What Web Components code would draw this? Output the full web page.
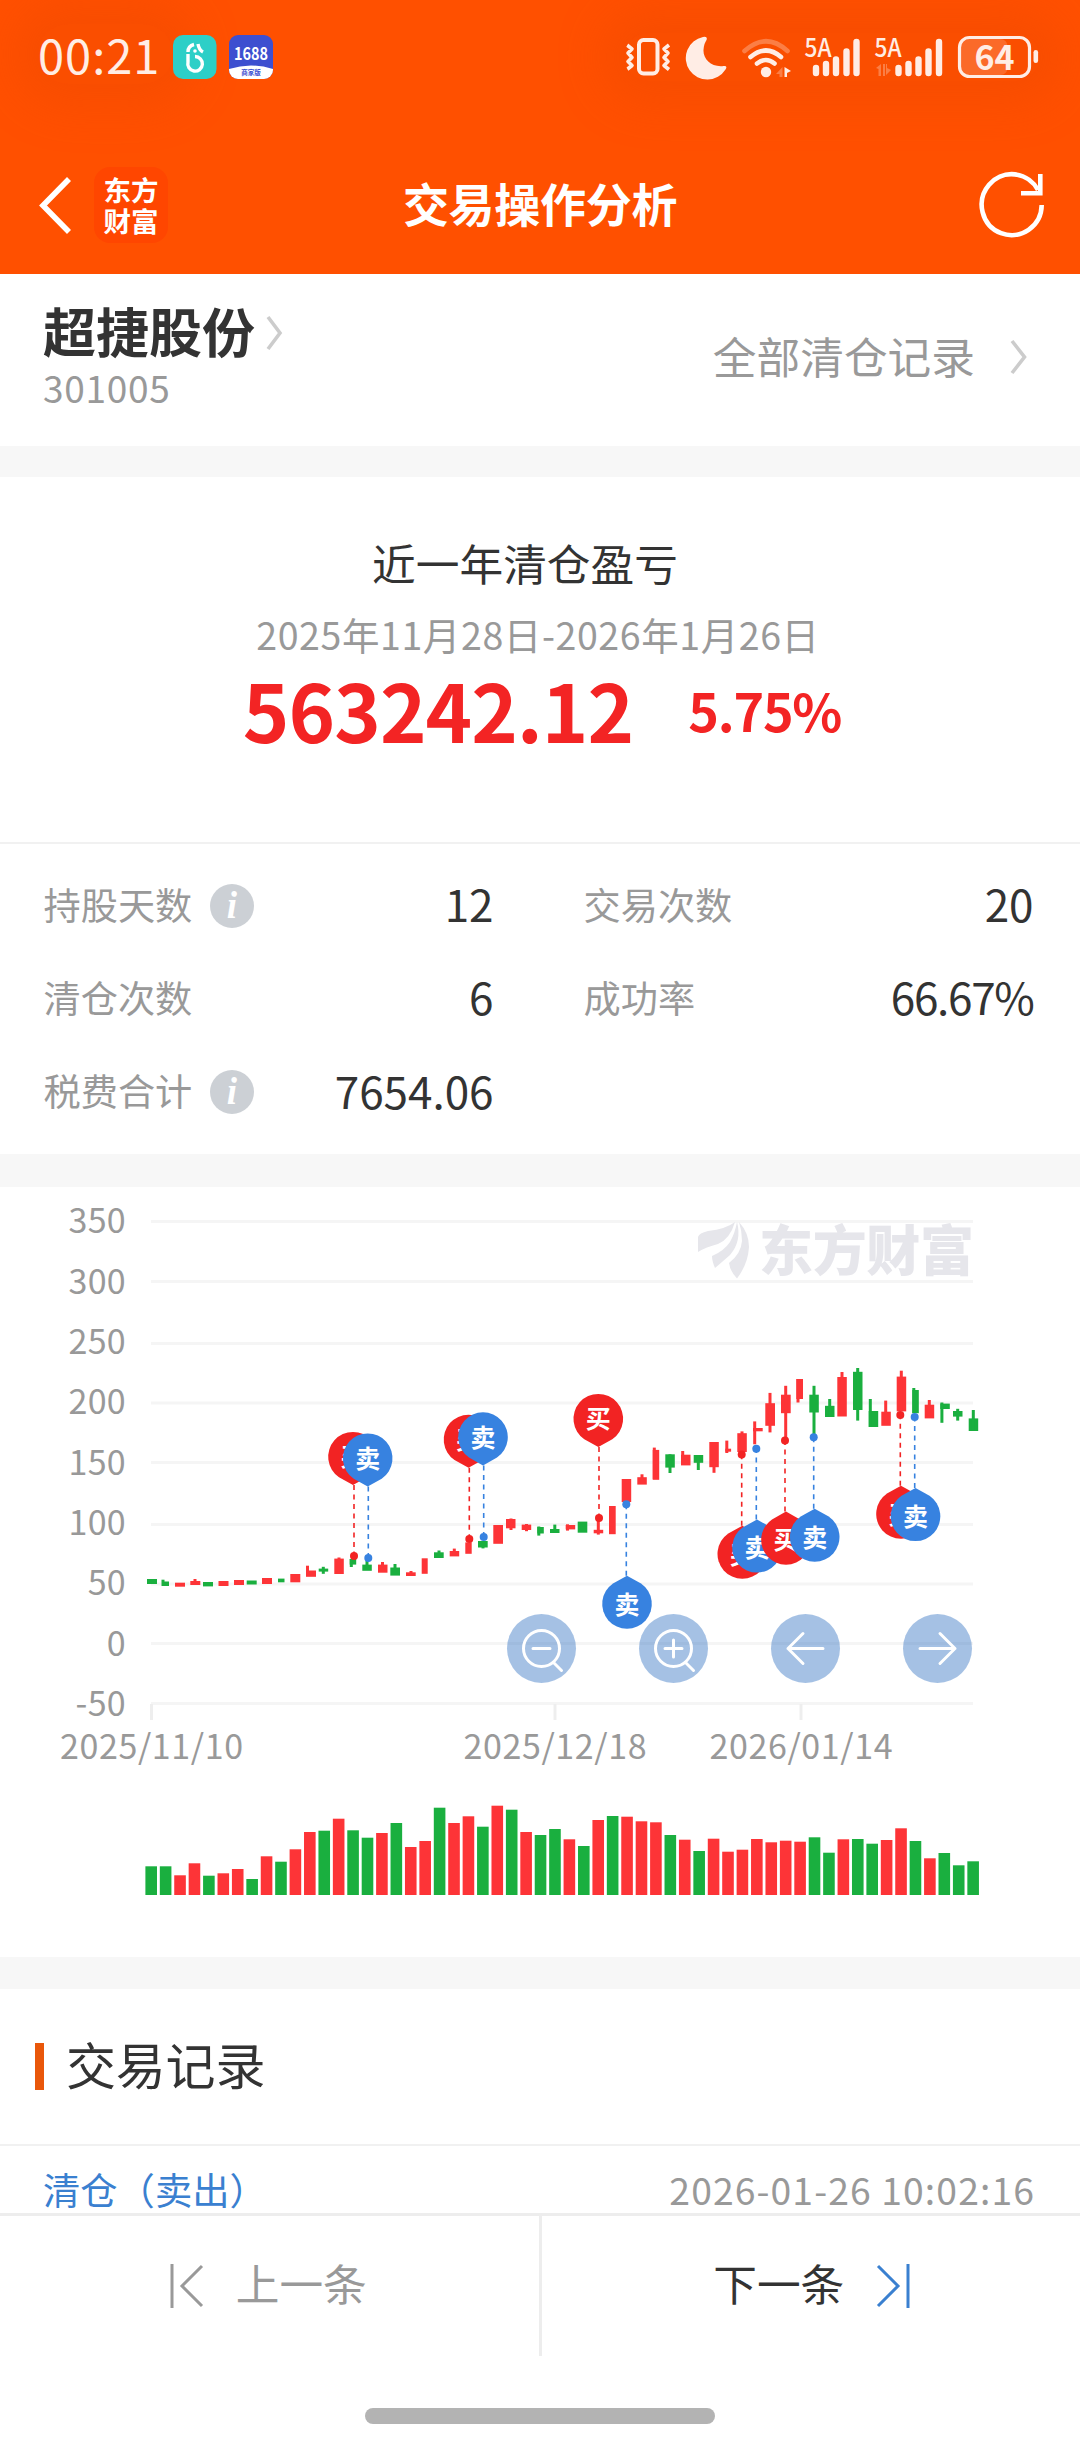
<!DOCTYPE html>
<html lang="zh-CN">
<head>
<meta charset="utf-8">
<title>交易操作分析</title>
<style>
	body{
		margin: 0;
		width: 1080px;
		height: 2444px;
		overflow: hidden;
		background: #fff;
		color: #333;
		font-family: "Noto Sans CJK SC", "Noto Sans", sans-serif;
		--grey: #999;
		--blue: #3a80d0;
		--line: #ededed;
	}
	main{
		display: flex;
		flex-direction: column;
		height: 2444px;
	}
	.top{
		background: #ff5000;
		height: 274px;
		flex: none;
		overflow: hidden;
	}
	.stats{
		box-sizing: border-box;
		display: grid;
		grid-template-columns: 450px 450px;
		grid-auto-rows: 93.3px;
		column-gap: 90px;
		height: 312px;
		flex: none;
		padding: 16px 0 0 43.500px;
		border-top: 2px solid #f1f1f1;
	}
</style>
</head>
<body>
<main>
	<div class="top">
		<status-bar></status-bar>
		<nav-bar>交易操作分析</nav-bar>
	</div>
	<stock-header code="301005">
		超捷股份
		<span slot="link">全部清仓记录</span>
	</stock-header>
	<section-gap style="--h: 31px"></section-gap>
	<profit-summary>
		近一年清仓盈亏
		<span slot="range">2025年11月28日-2026年1月26日</span>
		<span slot="amount">563242.12</span>
		<span slot="rate">5.75%</span>
	</profit-summary>
	<div class="stats">
		<stat-item value="12" info>持股天数</stat-item>
		<stat-item value="20">交易次数</stat-item>
		<stat-item value="6">清仓次数</stat-item>
		<stat-item value="66.67%">成功率</stat-item>
		<stat-item value="7654.06" info>税费合计</stat-item>
	</div>
	<section-gap style="--h: 33px"></section-gap>
	<trade-chart></trade-chart>
	<section-gap style="--h: 32px"></section-gap>
	<record-list>
		交易记录
		<span slot="type">清仓（卖出）</span>
		<span slot="time">2026-01-26 10:02:16</span>
	</record-list>
	<pager-bar>
		<span slot="prev">上一条</span>
		<span slot="next">下一条</span>
	</pager-bar>
</main>

<script>
'use strict';

function define(name, html, setup) {
	const template = document.createElement('template');
	template.innerHTML = html;
	customElements.define(name, class extends HTMLElement {
		constructor() {
			super();
			this.attachShadow({ mode: 'open' }).appendChild(template.content.cloneNode(true));
		}
		connectedCallback() {
			if (setup) setup(this.shadowRoot, this);
		}
	});
}

define('section-gap', `
	<style>
	:host{
		display: block;
		flex: none;
		height: var(--h);
		background: #f7f7f7;
	}
	</style>
`);

define('status-bar', `
	<style>
	:host{
		display: flex;
		justify-content: space-between;
		align-items: center;
		height: 114px;
		padding: 0 40px 0 38px;
		color: #ffede5;
	}
	.left{
		display: flex;
		align-items: center;
	}
	.time{
		width: 135px;
		font-size: 47px;
		line-height: 60px;
		letter-spacing: 1px;
		white-space: nowrap;
		margin-top: -6px;
		border-radius: 30px;
		background: rgb(236 72 0 / .25);
		box-shadow: 0 0 45px 20px rgb(236 72 0 / .4);
	}
	.right{
		border-radius: 40px;
		background: rgb(236 72 0 / .25);
		box-shadow: 0 0 45px 20px rgb(236 72 0 / .4);
	}
	svg{
		display: block;
	}
	</style>
	<div class="left">
		<div class="time">00:21</div>
		<svg width="100" height="44" viewBox="173 35 100 44">
			<rect x="173" y="35" width="43.500" height="44" rx="10" fill="#2dcfc7"/>
			<g fill="none" stroke="#fff" stroke-width="3.400">
				<path d="M188 52 q0 -6 6 -7.500"/>
				<path d="M188 54 v8 a7.300 7.300 0 1 0 7 -5.500"/>
				<path d="M198 44 q1 6 5 8"/>
			</g>
			<circle cx="195" cy="51" r="1.800" fill="#fff"/>
			<clipPath id="app"><rect x="229" y="35" width="44" height="44" rx="9"/></clipPath>
			<g clip-path="url(#app)">
				<rect x="229" y="35" width="44" height="44" fill="#3d4fd0"/>
				<path d="M229 69 Q251 62 273 69 V79 H229 Z" fill="#fff"/>
			</g>
			<text x="251" y="59.500" font-size="17" font-weight="700" fill="#fff" text-anchor="middle" textLength="34" lengthAdjust="spacingAndGlyphs">1688</text>
			<text x="251" y="74.500" font-size="6.500" font-weight="700" fill="#3d4fd0" text-anchor="middle">商家版</text>
		</svg>
	</div>
	<svg class="right" width="416" height="48" viewBox="624 33 416 48" fill="#ffede5">
		<rect x="639" y="40" width="18.500" height="33.500" rx="4.500" fill="none" stroke="#ffede5" stroke-width="4"/>
		<path d="M627 45 l5 4 l-4 4 l4 4.500 l-4 4 l4 4 l-5 4 M669 45 l-5 4 l4 4 l-4 4.500 l4 4 l-4 4 l5 4" fill="none" stroke="#ffede5" stroke-width="3.600" stroke-linejoin="round"/>
		<path d="M703 37 a21.500 21.500 0 1 0 22.500 32.500 q2.500 -4 -2 -3.500 c-12 1.500 -20.500 -7 -20 -16 c.3 -5 1.500 -7.500 3 -10 q1.500 -4 -3.500 -3 Z"/>
		<g fill="none" stroke="#ffede5" stroke-width="4.600" stroke-linecap="round">
			<path d="M744.500 51 Q766 31.500 787.500 51" opacity=".3"/>
			<path d="M750.500 57 Q766 44 781 57"/>
			<path d="M757 63.500 Q766 56.500 774.500 63.500"/>
		</g>
		<circle cx="766" cy="72" r="5.200"/>
		<path d="M782.500 67 v10 h-3 v-3 h-3.500 Z" opacity=".3"/>
		<path d="M784.500 67 l6.500 4 l-4 2 v4 h-2.500 Z"/>
		<text x="804.500" y="56.500" font-size="25" font-weight="500" textLength="27" lengthAdjust="spacingAndGlyphs">5A</text>
		<text x="874.500" y="56.500" font-size="25" font-weight="500" textLength="27" lengthAdjust="spacingAndGlyphs">5A</text>
		<g stroke="#ffede5" stroke-width="6.400" stroke-linecap="round">
			<path d="M816 68 v5 M826 64 v9 M836 59.500 v13.500 M846.500 51.500 v21.500 M856.500 42 v31"/>
			<path d="M898.500 68 v5 M908.500 64 v9 M918.500 59.500 v13.500 M928.500 51.500 v21.500 M939 42 v31"/>
		</g>
		<path d="M876 68 l5 -4 v12 h-2.500 v-7 Z M883 64 h2 v12 h-2 Z M887 64 v4 l4 2 l-5 5 v-11 Z" opacity=".3"/>
		<rect x="961" y="39" width="46.500" height="36" rx="7" opacity=".18"/>
		<rect x="959.500" y="37.500" width="70" height="39" rx="10" fill="none" stroke="#ffede5" stroke-width="3.200"/>
		<rect x="1033.500" y="50" width="4.600" height="13" rx="2.300"/>
		<text x="994.500" y="70" font-size="34" font-weight="700" text-anchor="middle">64</text>
	</svg>
`);

define('nav-bar', `
	<style>
	:host{
		display: grid;
		grid-template-columns: 200px 1fr 200px;
		align-items: center;
		height: 160px;
		padding-top: 22px;
		box-sizing: border-box;
		color: #fff;
	}
	.left{
		display: flex;
		align-items: center;
		gap: 20px;
		padding-left: 38px;
	}
	.brand{
		width: 74px;
		height: 76px;
		padding-top: 7px;
		box-sizing: border-box;
		border-radius: 16px;
		background: #ff4600;
		font-size: 27.500px;
		line-height: 31px;
		font-weight: 700;
		text-align: center;
	}
	h1{
		margin: 0 0 7px;
		font-size: 46px;
		line-height: 60px;
		font-weight: 700;
		text-align: center;
		letter-spacing: -.3px;
	}
	.reload{
		justify-self: end;
		margin-right: 34px;
	}
	svg{
		display: block;
	}
	</style>
	<div class="left">
		<svg width="36" height="60" viewBox="0 0 36 60"><path d="M31 4 L5 30.500 L31 57" fill="none" stroke="#fff" stroke-width="5.600"/></svg>
		<div class="brand">东方<br>财富</div>
	</div>
	<h1><slot></slot></h1>
	<svg class="reload" width="70" height="70" viewBox="975 170 70 70" fill="none" stroke="#fff" stroke-width="4.600">
		<path d="M1040.700 205 A30 30.500 0 1 1 1037 190"/>
		<path d="M1039.300 174 V193.300 H1020"/>
	</svg>
`);

define('stock-header', `
	<style>
	:host{
		display: flex;
		justify-content: space-between;
		flex: none;
		height: 172px;
		box-sizing: border-box;
		padding: 25px 52px 0 43px;
	}
	.name, .link{
		display: flex;
		align-items: center;
	}
	.name{
		gap: 11px;
		font-size: 53px;
		font-weight: 700;
		line-height: 62px;
	}
	.name svg{
		margin-top: 5px;
	}
	.code{
		margin-top: 6px;
		font-size: 37px;
		line-height: 40px;
		letter-spacing: .7px;
		color: var(--grey);
	}
	.link{
		gap: 35px;
		height: 100px;
		margin-top: 8px;
		font-size: 43.700px;
		color: var(--grey);
	}
	.link ::slotted(*){
		margin-top: -4px;
	}
	</style>
	<div>
		<div class="name">
			<span><slot></slot></span>
			<svg width="18" height="36" viewBox="0 0 18 36"><path d="M2 2 L14 18 L2 34" fill="none" stroke="#ccc" stroke-width="3.600"/></svg>
		</div>
		<div class="code"></div>
	</div>
	<div class="link">
		<slot name="link"></slot>
		<svg width="18" height="36" viewBox="0 0 18 36"><path d="M2 2 L14.500 18 L2 34" fill="none" stroke="#ccc" stroke-width="3.600"/></svg>
	</div>
`, (root, host) => {
	root.querySelector('.code').textContent = host.getAttribute('code');
});

define('profit-summary', `
	<style>
	:host{
		display: block;
		flex: none;
		height: 365px;
		box-sizing: border-box;
		padding-top: 54px;
		text-align: center;
	}
	.title{
		padding-right: 30px;
		font-size: 43.700px;
		line-height: 62px;
	}
	.range{
		font-size: 37.500px;
		line-height: 50px;
		margin-top: 16px;
		padding-right: 4px;
		letter-spacing: .6px;
		color: var(--grey);
	}
	.figures{
		display: flex;
		justify-content: center;
		align-items: center;
		gap: 55px;
		height: 90px;
		margin-top: 5px;
		padding-left: 4px;
		font-weight: 700;
		color: #f32424;
	}
	.amount{
		font-size: 79px;
		line-height: 90px;
		letter-spacing: -.9px;
	}
	.rate{
		font-size: 52px;
		line-height: 90px;
		letter-spacing: -1.2px;
		margin-top: 2px;
	}
	</style>
	<div class="title"><slot></slot></div>
	<div class="range"><slot name="range"></slot></div>
	<div class="figures">
		<div class="amount"><slot name="amount"></slot></div>
		<div class="rate"><slot name="rate"></slot></div>
	</div>
`);

define('stat-item', `
	<style>
	:host{
		display: flex;
		align-items: center;
	}
	.label{
		font-size: 37.200px;
		color: var(--grey);
		margin-top: -6px;
	}
	svg{
		display: none;
		margin: -2px 0 0 18px;
	}
	:host([info]) svg{
		display: block;
	}
	.value{
		margin-left: auto;
		margin-top: -7px;
		font-size: 44px;
	}
	:host([value$="%"]) .value{
		letter-spacing: -1.3px;
	}
	</style>
	<span class="label"><slot></slot></span>
	<svg width="44" height="44" viewBox="0 0 44 44">
		<circle cx="22" cy="22" r="22" fill="#ccd0d5"/>
		<text x="22" y="34" font-family="Liberation Serif, serif" font-size="37" font-weight="700" font-style="italic" fill="#fff" text-anchor="middle">i</text>
	</svg>
	<span class="value"></span>
`, (root, host) => {
	root.querySelector('.value').textContent = host.getAttribute('value');
});

// colour, body x, width, top, bottom, then wick x, high, low
const candles = [
	['g', 147, 10, 1580, 1585],
	['g', 162, 7, 1582.5, 1587, 163, 1580.7, 1587],
	['r', 175, 10, 1583.7, 1587.7],
	['r', 190.3, 10, 1582, 1586, 195, 1580, 1586],
	['g', 203, 10, 1583, 1587.4],
	['r', 218.5, 10, 1582, 1587],
	['r', 234, 10, 1581, 1586],
	['g', 246.7, 10, 1581.5, 1585.5],
	['r', 262, 10, 1579, 1585],
	['g', 278, 6.5, 1579.6, 1583.3],
	['r', 290.3, 10, 1575, 1583.3],
	['r', 306, 10, 1571.5, 1577.8, 307.5, 1566.7, 1577],
	['g', 318.7, 9.5, 1569.6, 1572.6, 323.3, 1567.8, 1574.8],
	['r', 334.3, 9.5, 1559.6, 1575, 339, 1558.5, 1575],
	['g', 349.7, 6.5, 1560, 1565.6, 351.3, 1560, 1568],
	['g', 362.3, 9.5, 1565.6, 1571.8, 367, 1562, 1571],
	['r', 378, 9.5, 1565.6, 1573.7, 382.5, 1563, 1573],
	['g', 390.3, 9.7, 1568.5, 1576.6, 395, 1565, 1576],
	['r', 406, 9.7, 1573.3, 1577, 411, 1572, 1577],
	['r', 421.7, 6, 1559.3, 1574.8],
	['g', 434, 9.7, 1553.3, 1559, 439, 1551.5, 1559],
	['r', 449.7, 9.5, 1552, 1557.4, 454.3, 1549.6, 1557],
	['r', 465.3, 6.4, 1543.4, 1554.8],
	['g', 478, 9.7, 1542, 1548.5, 483, 1542, 1549.4],
	['r', 493.3, 9.7, 1526, 1544.8],
	['r', 506, 9.5, 1520, 1529.3, 511, 1519.5, 1531],
	['r', 521.7, 9.5, 1525.6, 1531, 526.5, 1525, 1532.2],
	['g', 537.3, 6.5, 1528, 1534.5, 538.8, 1527.5, 1536.6],
	['g', 550, 9.5, 1530, 1534, 554.8, 1525.6, 1534],
	['r', 565.7, 9.5, 1526, 1530.4, 567.5, 1525.3, 1531.6],
	['g', 577.7, 9.6, 1522.6, 1533.7],
	['r', 593.7, 9.5, 1530.8, 1534.3, 598.3, 1522, 1535.6],
	['r', 609, 6.7, 1507, 1535.2],
	['r', 621.7, 9.5, 1480, 1503],
	['r', 637.3, 9.5, 1478.2, 1485.6, 642, 1475.3, 1485],
	['r', 652.7, 6.5, 1450.9, 1480.8, 654.3, 1448.6, 1480],
	['g', 665.3, 9.5, 1455.3, 1468.6, 670, 1455.3, 1474],
	['r', 681, 9.5, 1455.7, 1466.4, 682.7, 1452, 1466],
	['g', 693.7, 9.5, 1456, 1463.8, 698.3, 1456, 1471],
	['r', 709.3, 9.5, 1443, 1468.2, 714, 1443, 1473.8],
	['r', 725.3, 5.8, 1449.7, 1452.7, 726.8, 1441.6, 1454],
	['r', 737.3, 9.5, 1434.2, 1453, 742, 1432.4, 1453],
	['r', 753, 9.7, 1429, 1432.3, 754.7, 1422.4, 1445.3],
	['r', 765.3, 9.7, 1404.2, 1426.8, 770, 1393.9, 1433.4],
	['r', 781, 9.7, 1395.7, 1414.2, 785.7, 1386.8, 1441],
	['r', 796.3, 6.7, 1380, 1400, 798, 1380, 1403.5],
	['g', 809.3, 9.5, 1395.7, 1413.5, 814, 1386.8, 1438],
	['g', 825, 9.5, 1406.8, 1418, 829.7, 1400, 1418],
	['r', 837.3, 9.5, 1378, 1417.5, 842, 1373, 1417],
	['g', 853, 9.5, 1372.8, 1411, 857.7, 1369, 1421.6],
	['g', 868.7, 9.5, 1412, 1428, 870.3, 1400, 1428],
	['r', 881.3, 9.5, 1412.7, 1426.8, 885.7, 1401.6, 1426],
	['r', 896.7, 9.5, 1377.6, 1412.4, 901.3, 1371.7, 1412],
	['g', 912.3, 6.5, 1391, 1414.2, 913.8, 1389, 1414],
	['r', 924.7, 9.5, 1405.7, 1419.4, 929.3, 1401, 1419],
	['g', 940.3, 9.5, 1404.6, 1410, 941.9, 1403.5, 1423.8],
	['g', 953, 9.5, 1412, 1417.6, 957.7, 1409.8, 1421.6],
	['g', 968.7, 9.5, 1419.4, 1432, 973.3, 1411, 1432],
];

const volumes = 'g28.7 g28.7 r19.7 r31.7 g19.3 r21.7 r26 g16 r38.7 g33.3 r45.7 r63 g64.3 r76.3 g64.7 g57.3 r62 g72 r48 r54 g87.3 r72 r78.7 g68.3 r89.3 g85.3 r63 g60 g66 r55.7 g49 r75 g79 r78.3 r73.7 r72.7 g60 r55.3 g44 r56.3 r43.3 r45.3 r56 r52.7 r54.3 r53.3 g57.7 g42.3 r55.7 g56 g51.3 r55 r66.7 g54 r36.7 g42 g29.7 g33.7'.split(' ');

// side, pin x, tip y, dot x, dot y; the pin hangs above its dot or below it
const pins = [
	['买', 353, 1486, 354, 1557],
	['卖', 367.7, 1487.5, 368.3, 1559],
	['买', 468.5, 1468.8, 469.3, 1540],
	['卖', 483, 1466.4, 483.7, 1538],
	['买', 598.3, 1448, 599, 1519],
	['卖', 627, 1576.7, 626.3, 1505.2],
	['买', 742.3, 1526.7, 741.7, 1455.6],
	['卖', 757, 1520.5, 756.3, 1449.7],
	['买', 786, 1512.6, 785, 1441.6],
	['卖', 814.7, 1509.7, 813.7, 1438.3],
	['买', 901, 1486.7, 900.3, 1416],
	['卖', 915.5, 1489, 914.7, 1418],
];

const gridLines = [1222.5, 1282.5, 1344.5, 1404, 1463.5, 1525.5, 1585, 1644.5, 1704.5];

const fills = { r: '#fd3437', g: '#1aaf3f' };

define('trade-chart', `
	<style>
	:host{
		display: block;
		flex: none;
		height: 770px;
	}
	svg{
		display: block;
	}
	.axis text{
		font-size: 34px;
		fill: var(--grey);
	}
	.axis path{
		stroke: #f5f5f5;
		stroke-width: 3;
	}
	.axis .tick{
		stroke: #eee;
	}
	.pins text{
		font-size: 25px;
		font-weight: 700;
		fill: #fff;
		text-anchor: middle;
	}
	.tools circle{
		fill: rgb(55 117 195 / .45);
	}
	.tools path{
		fill: none;
		stroke: #fff;
		stroke-width: 3;
		stroke-linecap: round;
		stroke-linejoin: round;
	}
	</style>
	<svg width="1080" height="770" viewBox="0 1188 1080 770">
		<g class="axis"></g>
		<g fill="#e6e6eb">
			<path d="M698 1238 Q699 1234 708 1232 Q726 1230 735 1223 Q730 1240 718 1245 Q706 1248 698 1253 Z"/>
			<path d="M737 1223 Q742 1242 730 1256 Q722 1263 715 1269 Q712 1262 712 1257 Q724 1252 730 1243 Q735 1234 737 1223 Z"/>
			<path d="M739 1223 Q749 1234 749 1248 Q748 1265 737 1279.500 Q730 1272 729 1264 Q741 1255 742 1242 Q742 1232 739 1223 Z"/>
			<text x="759" y="1271.500" font-size="54" font-weight="900" textLength="215">东方财富</text>
		</g>
		<g class="candles"></g>
		<g class="volumes"></g>
		<g class="pins"></g>
		<g class="tools">
			<circle cx="541.500" cy="1649.500" r="34.500"/>
			<circle cx="673.500" cy="1649.500" r="34.500"/>
			<circle cx="805.500" cy="1649.500" r="34.500"/>
			<circle cx="937.500" cy="1649.500" r="34.500"/>
			<path d="M559.500 1649.500 a18 18 0 1 0 -36 0 a18 18 0 1 0 36 0 M533 1649.500 h17 M553.500 1663.500 l8 8"/>
			<path d="M691.500 1649.500 a18 18 0 1 0 -36 0 a18 18 0 1 0 36 0 M665 1649.500 h17 M673.500 1641 v17 M685.500 1663.500 l8 8"/>
			<path d="M823 1649.500 H788 M803 1634.500 L788 1649.500 L803 1664.500"/>
			<path d="M920 1649.500 H955 M940 1634.500 L955 1649.500 L940 1664.500"/>
		</g>
	</svg>
`, root => {
	let axis = gridLines.map((y, i) =>
		`<path d="M151 ${y} H973"/><text x="126" y="${1234.3 + i * 60.35}" text-anchor="end" letter-spacing=".3">${350 - i * 50}</text>`
	).join('');
	[[151.5, '2025/11/10'], [555, '2025/12/18'], [801, '2026/01/14']].forEach(([x, label]) => {
		axis += `<path class="tick" d="M${x} 1705 v16"/><text x="${x}" y="1759.5" text-anchor="middle" textLength="183">${label}</text>`;
	});
	root.querySelector('.axis').innerHTML = axis;

	root.querySelector('.candles').innerHTML = candles.map(([c, x, w, top, bottom, wick, high, low]) =>
		`<g fill="${fills[c]}"><rect x="${x}" y="${top}" width="${w}" height="${bottom - top}"/>` +
		(wick ? `<rect x="${wick - 1.5}" y="${high}" width="3" height="${low - high}"/>` : '') + '</g>'
	).join('');

	root.querySelector('.volumes').innerHTML = volumes.map((v, i) => {
		const h = +v.slice(1);
		return `<rect x="${145.4 + i * 14.42}" y="${1896 - h}" width="11.6" height="${h}" fill="${fills[v[0]]}"/>`;
	}).join('');

	root.querySelector('.pins').innerHTML = pins.map(([side, x, tip, dx, dy]) => {
		const color = side === '买' ? '#f22323' : '#3782e0';
		const dir = tip < dy ? -1 : 1;
		const cy = tip + dir * 28.3;
		return `<path d="M${dx} ${tip} V${dy}" stroke="${color}" stroke-width="1.6" stroke-dasharray="5 4.5"/>
			<circle cx="${dx}" cy="${dy}" r="4" fill="${color}"/>
			<path d="M${x} ${tip} L${x + 14} ${cy - dir * 20.5} A24.8 24.8 0 1 ${dir > 0 ? 1 : 0} ${x - 14} ${cy - dir * 20.5} Z" fill="${color}"/>
			<text x="${x}" y="${cy + 9.5}">${side}</text>`;
	}).join('');
});

define('record-list', `
	<style>
	:host{
		display: block;
		flex: none;
		height: 224px;
	}
	.head{
		display: flex;
		align-items: center;
		gap: 22px;
		height: 155px;
		padding-left: 35px;
		font-size: 50px;
		border-bottom: 2px solid #f1f1f1;
	}
	.head::before{
		content: "";
		width: 9px;
		height: 47px;
		background: #e9570a;
	}
	.head span{
		margin-top: -8px;
		letter-spacing: -.2px;
	}
	.row{
		display: flex;
		justify-content: space-between;
		padding: 16px 45px 0 43px;
		font-size: 37.300px;
		line-height: 54px;
	}
	.type{
		color: var(--blue);
	}
	.time{
		color: var(--grey);
		letter-spacing: 1.1px;
	}
	</style>
	<div class="head"><span><slot></slot></span></div>
	<div class="row">
		<span class="type"><slot name="type"></slot></span>
		<span class="time"><slot name="time"></slot></span>
	</div>
`);

define('pager-bar', `
	<style>
	:host{
		display: flex;
		flex-direction: column;
		align-items: center;
		flex: 1;
		border-top: 3px solid var(--line);
	}
	.buttons{
		display: grid;
		grid-template-columns: 1fr 3px 1fr;
		width: 100%;
		height: 140px;
	}
	.buttons i{
		background: var(--line);
	}
	.buttons div{
		display: flex;
		justify-content: center;
		align-items: center;
		gap: 32px;
		font-size: 43.700px;
		line-height: 60px;
	}
	.buttons span{
		margin-top: -9px;
	}
	.buttons svg{
		margin-top: -1px;
	}
	.prev{
		color: var(--grey);
		padding-right: 2px;
	}
	.next{
		padding-left: 2px;
	}
	path{
		fill: none;
		stroke: currentColor;
		stroke-width: 3;
	}
	.next svg{
		color: var(--blue);
	}
	.home{
		width: 350px;
		height: 16px;
		margin-top: 52px;
		border-radius: 8px;
		background: #b3b3b3;
	}
	</style>
	<div class="buttons">
		<div class="prev">
			<svg width="34" height="44" viewBox="0 0 34 44"><path d="M2 0 V44 M32 2 L12 22 L32 42"/></svg>
			<span><slot name="prev"></slot></span>
		</div>
		<i></i>
		<div class="next">
			<span><slot name="next"></slot></span>
			<svg width="34" height="44" viewBox="0 0 34 44"><path d="M32 0 V44 M2 2 L22 22 L2 42"/></svg>
		</div>
	</div>
	<div class="home"></div>
`);
</script>
</body>
</html>
